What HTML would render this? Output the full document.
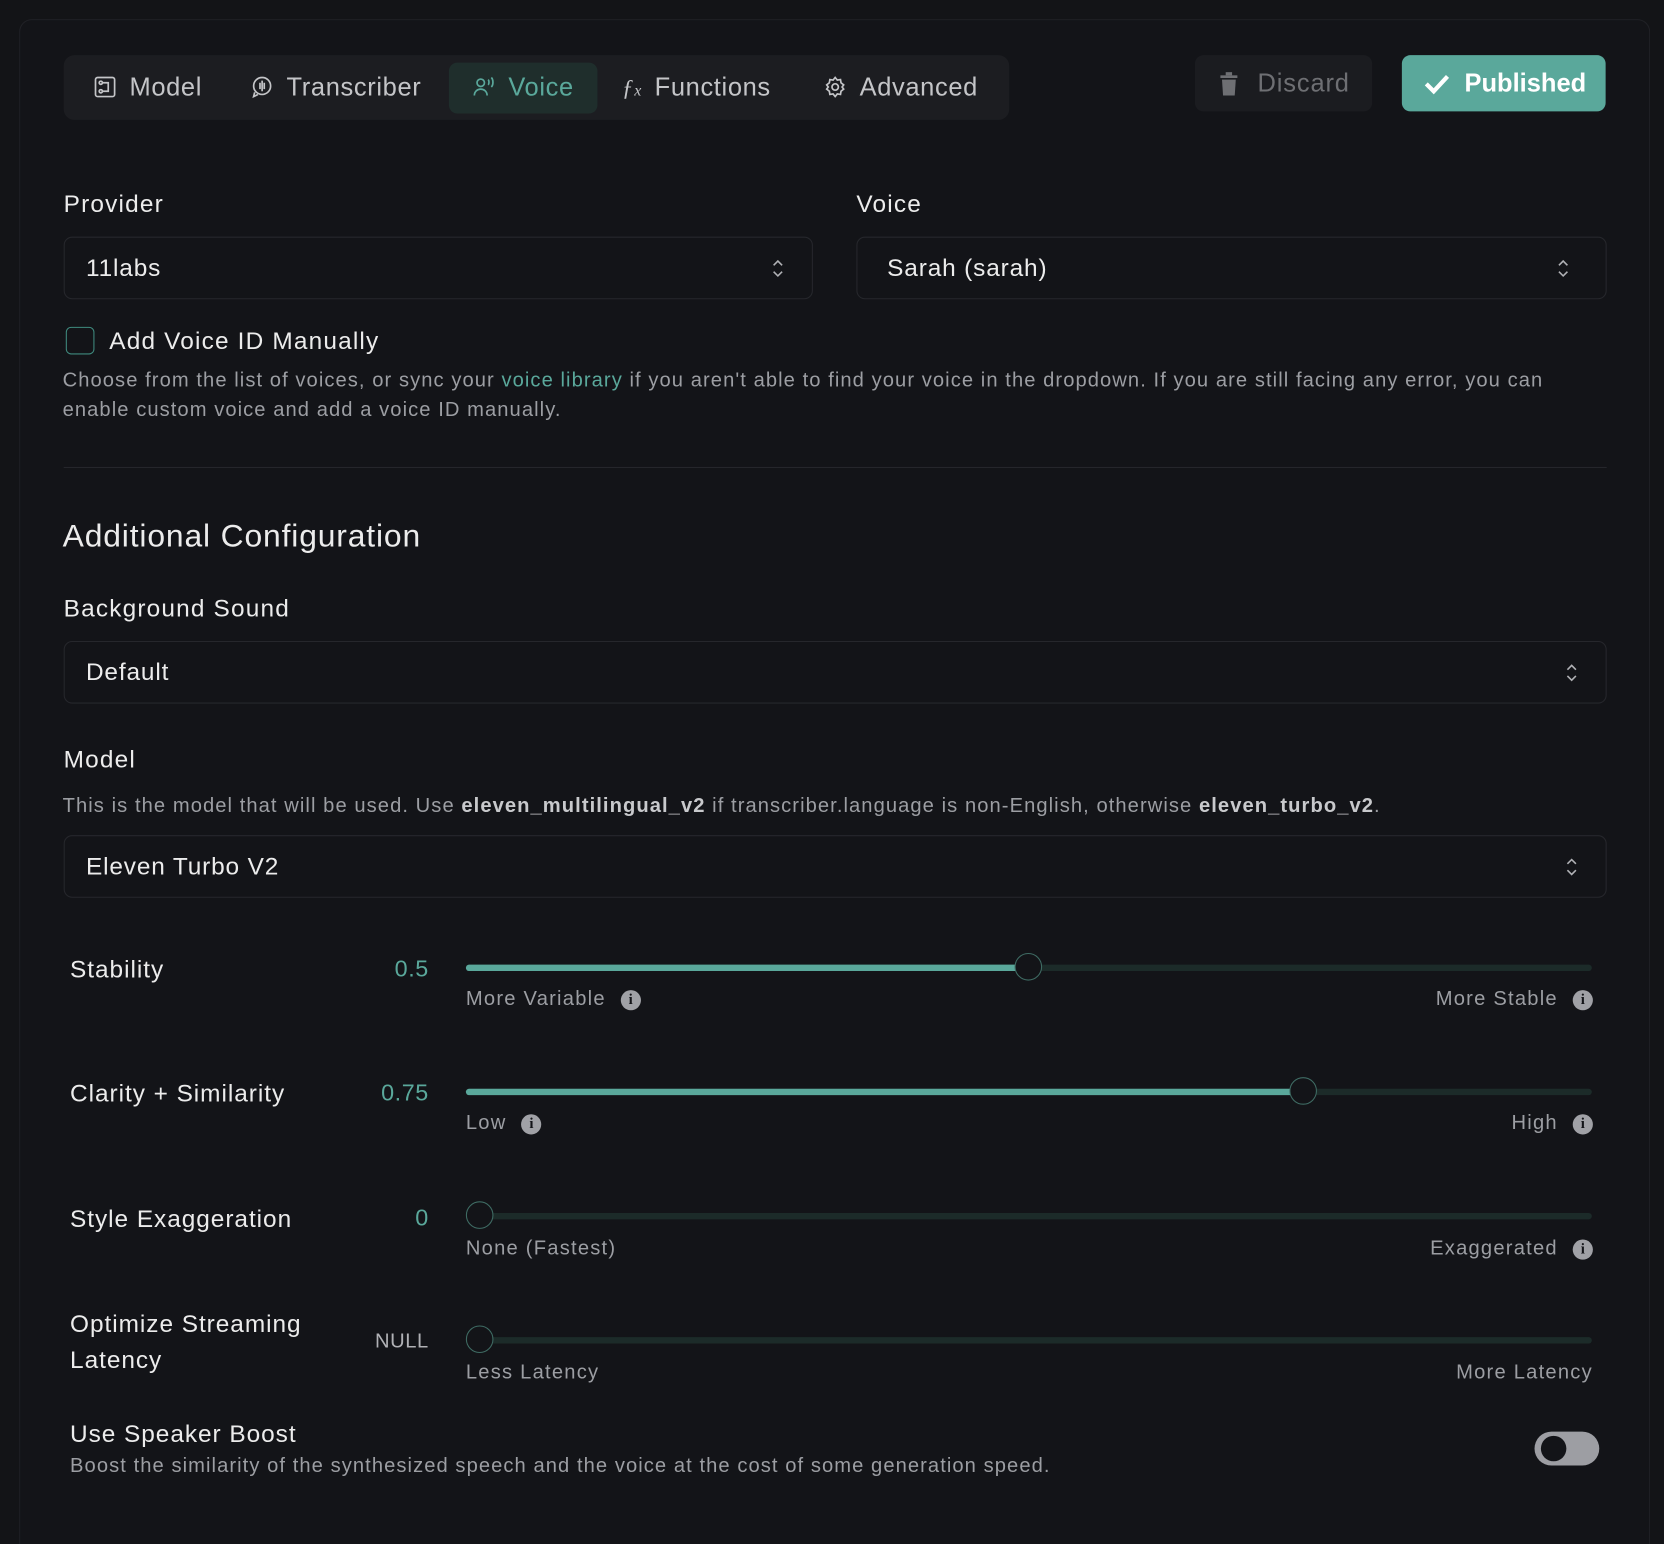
<!DOCTYPE html>
<html><head><meta charset="utf-8"><style>
html,body{margin:0;padding:0;background:#131417;width:1664px;height:1544px;overflow:hidden;font-family:"Liberation Sans",sans-serif;}
#w{position:absolute;left:0;top:0;width:1568px;height:1455px;overflow:hidden;transform:scale(1.06122);transform-origin:0 0;}
.a{position:absolute;}
.card{left:18px;top:18px;width:1535px;height:1450px;border:1px solid #202126;border-bottom:none;border-radius:12px 12px 0 0;background:#131418;}
.tabs{left:60px;top:52px;width:891px;height:61px;background:#1c1d21;border-radius:10px;}
.tab{position:absolute;top:7px;height:48px;line-height:48px;font-size:24px;color:#c4c5c8;letter-spacing:0.6px}
.tab svg{vertical-align:-3px;margin-right:12px}
.sel{position:absolute;height:59px;border:1px solid #26272c;border-radius:8px;box-sizing:border-box;font-size:23px;color:#ececec;line-height:57px;padding-left:20px;letter-spacing:0.8px}
.chev{position:absolute;right:26px;top:19px}
.lbl{position:absolute;font-size:23px;color:#ececec;letter-spacing:1.1px}
.help{position:absolute;font-size:19px;color:#9c9ea3;line-height:28px;letter-spacing:1px}
.track{position:absolute;left:439px;width:1061px;height:6px;background:#1c2b29;border-radius:3px}
.fill{position:absolute;left:0;top:0;height:6px;background:#5aa89b;border-radius:3px}
.thumb{position:absolute;width:26px;height:26px;border:1.5px solid #3f6c64;border-radius:50%;background:#131418;top:-11px;box-sizing:border-box}
.sl{position:absolute;font-size:23px;color:#ececec;left:66px;line-height:34px;letter-spacing:0.9px}
.val{position:absolute;right:1164px;font-size:22px;color:#5aa89b;letter-spacing:0.5px}
.sub{position:absolute;font-size:19px;color:#9c9ea3;letter-spacing:1.15px}
.info{display:inline-block;width:19px;height:19px;border-radius:50%;background:#a0a1a6;color:#131418;font-size:14px;font-weight:bold;text-align:center;line-height:19px;font-family:"Liberation Serif",serif;vertical-align:1px;margin-left:14px;letter-spacing:0}
</style></head><body><div id="w">
<div class="a card"></div>
<div class="a tabs">
 <div class="tab" style="left:28px"><svg width="22" height="22" viewBox="0 0 22 22" fill="none" stroke="#c4c5c8" stroke-width="1.6"><rect x="2" y="2" width="18" height="18" rx="2"/><circle cx="7" cy="7" r="1.5"/><circle cx="7" cy="15" r="1.5"/><path d="M9 7h5v8h-5"/></svg>Model</div>
 <div class="tab" style="left:176px"><svg width="22" height="22" viewBox="0 0 22 22" fill="none" stroke="#c4c5c8" stroke-width="1.6"><circle cx="11" cy="10" r="8"/><path d="M4 16l-1 4 4-2M9 7v6M11 5v10M13 7v6"/></svg>Transcriber</div>
 <div class="tab" style="left:363px;width:140px;background:#1f2e2c;border-radius:8px;color:#5aa89b;text-indent:22px"><svg width="22" height="22" viewBox="0 0 22 22" fill="none" stroke="#5aa89b" stroke-width="1.6"><circle cx="8" cy="7" r="3.5"/><path d="M2 19c0-4 3-6 6-6s6 2 6 6M15 4c1 1 1 4 0 5M18 2c2 2 2 7 0 9"/></svg>Voice</div>
 <div class="tab" style="left:526px"><span style="font-family:'Liberation Serif',serif;font-style:italic;font-size:22px;margin-right:12px">ƒ<span style="font-size:15px">x</span></span>Functions</div>
 <div class="tab" style="left:716px"><svg width="22" height="22" viewBox="0 0 22 22" fill="none" stroke="#c4c5c8" stroke-width="1.6"><circle cx="11" cy="11" r="3"/><path d="M11 2l2 2.5 3-.5.5 3L19 9l-1.5 2L19 13l-2.5 2-.5 3-3-.5L11 20l-2-2.5-3 .5-.5-3L3 13l1.5-2L3 9l2.5-2 .5-3 3 .5z"/></svg>Advanced</div>
</div>
<div class="a" style="left:1126px;top:52px;width:167px;height:53px;background:#1b1c20;border-radius:8px;color:#6e6f73;font-size:24px;line-height:53px;letter-spacing:0.8px"><svg style="position:absolute;left:22px;top:15px" width="20" height="24" viewBox="0 0 20 24"><rect x="2" y="4" width="16" height="2.5" fill="#6e6f73"/><rect x="7" y="1" width="6" height="3" fill="#6e6f73"/><path d="M3.5 8h13l-1 15h-11z" fill="#6e6f73"/></svg><span style="position:absolute;left:59px">Discard</span></div>
<div class="a" style="left:1321px;top:52px;width:192px;height:53px;background:#5aa89b;border-radius:8px;color:#fff;font-size:24px;font-weight:bold;line-height:53px"><svg style="position:absolute;left:20px;top:16px" width="26" height="22" viewBox="0 0 26 22"><path d="M3 11l7 7L23 4" fill="none" stroke="#fff" stroke-width="4"/></svg><span style="position:absolute;left:59px">Published</span></div>

<div class="lbl" style="left:60px;top:179px">Provider</div>
<div class="lbl" style="left:807px;top:179px">Voice</div>
<div class="sel" style="left:60px;top:223px;width:706px">11labs<svg class="chev" width="12" height="20" viewBox="0 0 12 20" fill="none" stroke="#b0b1b5" stroke-width="1.5"><path d="M2 7l4-4 4 4M2 13l4 4 4-4"/></svg></div>
<div class="sel" style="left:807px;top:223px;width:707px;padding-left:28px">Sarah (sarah)<svg class="chev" style="right:34px" width="12" height="20" viewBox="0 0 12 20" fill="none" stroke="#b0b1b5" stroke-width="1.5"><path d="M2 7l4-4 4 4M2 13l4 4 4-4"/></svg></div>
<div class="a" style="left:62px;top:308px;width:27px;height:26px;border:1.5px solid #3f8a7e;border-radius:5px;box-sizing:border-box"></div>
<div class="lbl" style="left:103px;top:308px">Add Voice ID Manually</div>
<div class="help" style="left:59px;top:345px;width:1440px">Choose from the list of voices, or sync your <span style="color:#5aa89b">voice library</span> if you aren't able to find your voice in the dropdown. If you are still facing any error, you can enable custom voice and add a voice ID manually.</div>
<div class="a" style="left:60px;top:440px;width:1454px;height:1px;background:#25262b"></div>
<div class="a" style="left:59px;top:489px;font-size:30px;color:#ececec;letter-spacing:0.8px">Additional Configuration</div>
<div class="lbl" style="left:60px;top:560px">Background Sound</div>
<div class="sel" style="left:60px;top:604px;width:1454px">Default<svg class="chev" width="12" height="20" viewBox="0 0 12 20" fill="none" stroke="#b0b1b5" stroke-width="1.5"><path d="M2 7l4-4 4 4M2 13l4 4 4-4"/></svg></div>
<div class="lbl" style="left:60px;top:702px">Model</div>
<div class="help" style="left:59px;top:746px">This is the model that will be used. Use <b style="color:#c8c9cc">eleven_multilingual_v2</b> if transcriber.language is non-English, otherwise <b style="color:#c8c9cc">eleven_turbo_v2</b>.</div>
<div class="sel" style="left:60px;top:787px;width:1454px">Eleven Turbo V2<svg class="chev" width="12" height="20" viewBox="0 0 12 20" fill="none" stroke="#b0b1b5" stroke-width="1.5"><path d="M2 7l4-4 4 4M2 13l4 4 4-4"/></svg></div>

<div class="sl" style="top:896px">Stability</div><div class="val" style="top:900px">0.5</div>
<div class="track" style="top:909px"><div class="fill" style="width:530px"></div><div class="thumb" style="left:517px"></div></div>
<div class="sub" style="left:439px;top:931px">More Variable<span class="info">i</span></div>
<div class="sub" style="right:67px;top:931px">More Stable<span class="info">i</span></div>

<div class="sl" style="top:1013px">Clarity + Similarity</div><div class="val" style="top:1017px">0.75</div>
<div class="track" style="top:1026px"><div class="fill" style="width:790px"></div><div class="thumb" style="left:776px"></div></div>
<div class="sub" style="left:439px;top:1048px">Low<span class="info">i</span></div>
<div class="sub" style="right:67px;top:1048px">High<span class="info">i</span></div>

<div class="sl" style="top:1131px">Style Exaggeration</div><div class="val" style="top:1135px">0</div>
<div class="track" style="top:1143px"><div class="thumb" style="left:0px"></div></div>
<div class="sub" style="left:439px;top:1166px">None (Fastest)</div>
<div class="sub" style="right:67px;top:1166px">Exaggerated<span class="info">i</span></div>

<div class="sl" style="top:1230px">Optimize Streaming<br>Latency</div><div class="val" style="top:1254px;color:#b0b1b5;font-size:19px">NULL</div>
<div class="track" style="top:1260px"><div class="thumb" style="left:0px"></div></div>
<div class="sub" style="left:439px;top:1283px">Less Latency</div>
<div class="sub" style="right:67px;top:1283px">More Latency</div>

<div class="sl" style="top:1334px">Use Speaker Boost</div>
<div class="help" style="left:66px;top:1368px">Boost the similarity of the synthesized speech and the voice at the cost of some generation speed.</div>
<div class="a" style="left:1446px;top:1349px;width:61px;height:32px;border-radius:16px;background:#9d9ea3"><div class="a" style="left:6px;top:4px;width:24px;height:24px;border-radius:50%;background:#131418"></div></div>
</div></body></html>
